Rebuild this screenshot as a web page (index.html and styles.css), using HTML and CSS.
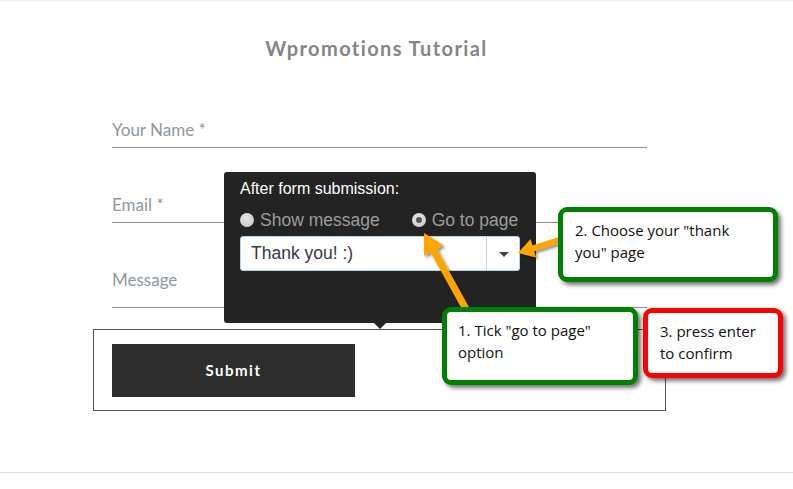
FILE: index.html
```html
<!DOCTYPE html>
<html>
<head>
    <title>Wpromotions Tutorial</title>
    <link rel="stylesheet" href="styles.css">
</head>
<body>
    <div class="page">
        <div class="topbar"></div>

        <div class="form-wrap">
            <h1 class="title">Wpromotions Tutorial</h1>

            <div class="fields">
                <div class="field">Your Name *</div>
                <div class="field">Email *</div>
                <div class="field field-message">Message</div>
            </div>

            <div class="submit-box">
                <button class="submit-btn">Submit</button>
            </div>
        </div>

        <div class="footer-line"></div>

        <!-- settings popup over the form -->
        <div class="popup">
            <div class="popup-title">After form submission:</div>
            <div class="radio-row">
                <span class="radio"><span class="dot"></span>Show message</span>
                <span class="radio checked"><span class="dot"></span>Go to page</span>
            </div>
            <div class="select">
                <span class="select-value">Thank you! :)</span>
                <span class="select-caret"></span>
            </div>
        </div>

        <svg class="arrows" width="793" height="489" viewBox="0 0 793 489">
            <defs>
                <filter id="shadow" x="-20%" y="-20%" width="140%" height="140%">
                    <feDropShadow dx="2" dy="2" stdDeviation="1.5" flood-color="#000" flood-opacity="0.45"/>
                </filter>
            </defs>
            <polygon filter="url(#shadow)" fill="#ffa500"
                points="424,233 443.4,245.3 436.8,248.9 475.1,318.3 468.9,321.7 430.6,252.3 424,255.9"/>
            <polygon filter="url(#shadow)" fill="#ffa500"
                points="518,253 536,257.5 534.2,251.2 560.9,242.9 559.1,237.1 532.4,245.4 530.6,239"/>
        </svg>

        <div class="callout callout-choose">2. Choose your "thank you" page</div>
        <div class="callout callout-tick">1. Tick "go to page" option</div>
        <div class="callout callout-enter">3. press enter to confirm</div>
    </div>
</body>
</html>
```

FILE: styles.css
```css
body {
    margin: 0;
    background: #fff;
    font-family: "Lato", "Open Sans", sans-serif;
}
.page {
    position: relative;
    width: 793px;
    height: 489px;
    overflow: hidden;
}
.topbar {
    height: 2px;
    background: #f4f4f4;
}
.form-wrap {
    margin-left: 93px;
    width: 573px;
}
.title {
    margin: 32px 0 0;
    height: 28px;
    line-height: 28px;
    text-align: center;
    font-size: 20px;
    font-weight: 700;
    letter-spacing: 1.4px;
    color: #858585;
    padding-right: 6px;
}
.fields {
    padding: 53px 19px 0;
}
.field {
    box-sizing: border-box;
    height: 33px;
    padding-top: 5px;
    line-height: 20px;
    font-size: 17px;
    color: #8f97a1;
    border-bottom: 1px solid #8f8f8f;
    margin-bottom: 42px;
}
.field-message {
    height: 43px;
    padding-top: 5px;
    margin-bottom: 21px;
}
.submit-box {
    border: 1px solid #555;
    padding: 14px 18px 13px;
}
.submit-btn {
    display: block;
    width: 243px;
    height: 53px;
    padding-bottom: 3px;
    border: none;
    background: #2d2d2d;
    color: #fff;
    font-family: "Lato", sans-serif;
    font-weight: 700;
    font-size: 15px;
    letter-spacing: 1.5px;
    cursor: pointer;
}
.footer-line {
    margin-top: 61px;
    border-top: 1px solid #dcdcdc;
}

/* popup */
.popup {
    position: absolute;
    left: 224px;
    top: 172px;
    width: 312px;
    height: 151px;
    box-sizing: border-box;
    padding: 7px 16px 0;
    background: #232323;
    border-radius: 3px;
    font-family: "Liberation Sans", Arial, sans-serif;
    z-index: 2;
}
.popup::after {
    content: "";
    position: absolute;
    left: 150px;
    bottom: -6px;
    border-left: 6px solid transparent;
    border-right: 6px solid transparent;
    border-top: 6px solid #232323;
}
.popup-title {
    color: #fff;
    font-size: 16px;
    line-height: 20px;
}
.radio-row {
    display: flex;
    gap: 32px;
    margin-top: 10px;
    height: 22px;
    align-items: center;
}
.radio {
    display: flex;
    align-items: center;
    gap: 6px;
    color: #9c9c9c;
    font-size: 17.5px;
}
.dot {
    width: 14px;
    height: 14px;
    border-radius: 50%;
    background: radial-gradient(circle at 40% 35%, #e6e6e6, #c4c4c4);
    position: relative;
}
.checked .dot::after {
    content: "";
    position: absolute;
    left: 4px;
    top: 4px;
    width: 6px;
    height: 6px;
    border-radius: 50%;
    background: #555;
}
.select {
    margin-top: 5px;
    display: flex;
    height: 35px;
    box-sizing: border-box;
    background: #fff;
    border: 1px solid #b9d3ee;
    border-radius: 3px;
}
.select-value {
    flex: 1;
    padding-left: 10px;
    line-height: 33px;
    font-size: 17.5px;
    color: #353a42;
    border-right: 1px solid #d0d0d0;
}
.select-caret {
    width: 32px;
    position: relative;
}
.select-caret::after {
    content: "";
    position: absolute;
    left: 12px;
    top: 15px;
    border-left: 5px solid transparent;
    border-right: 5px solid transparent;
    border-top: 5px solid #3c4450;
}

/* arrows and notes */
.arrows {
    position: absolute;
    left: 0;
    top: 0;
    z-index: 3;
    pointer-events: none;
}
.callout {
    position: absolute;
    box-sizing: border-box;
    background: #fff;
    border: 5px solid #008000;
    border-radius: 9px;
    box-shadow: 3px 3px 4px rgba(0,0,0,0.55);
    font-family: "Open Sans", sans-serif;
    font-size: 15px;
    line-height: 22px;
    color: #111;
    z-index: 4;
}
.callout-choose {
    left: 558px;
    top: 207px;
    width: 220px;
    height: 75px;
    padding: 7px 20px 0 12px;
}
.callout-tick {
    left: 442px;
    top: 307px;
    width: 196px;
    height: 78px;
    padding: 7px 14px 0 11px;
}
.callout-enter {
    left: 643px;
    top: 308px;
    width: 140px;
    height: 70px;
    padding: 7px 8px 0 12px;
    border-color: #ff0000;
}
```
